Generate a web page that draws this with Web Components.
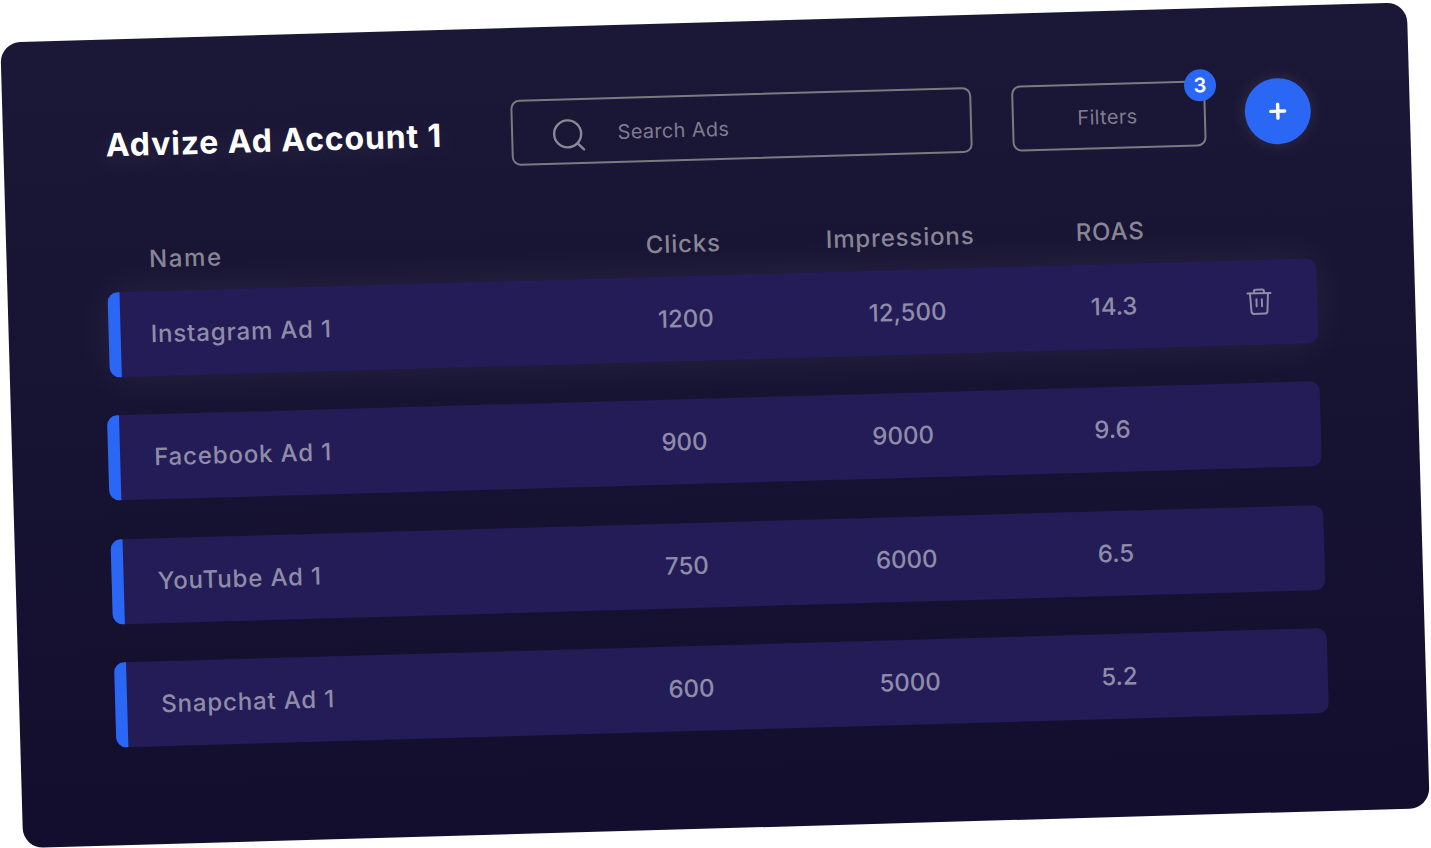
<!DOCTYPE html>
<html>
<head>
<meta charset="utf-8">
<title>Advize</title>
<style>
  html, body { margin: 0; height: 100%; background: #fff; overflow: hidden; }
  body { display: flex; align-items: center; justify-content: center; font-family: Inter, "Liberation Sans", sans-serif; }
</style>
</head>
<body>
<ad-card>
  <ad-toolbar slot="toolbar" heading="Advize Ad Account 1" count="3"></ad-toolbar>
  <ad-row slot="head" kind="head" name="Name" clicks="Clicks" impressions="Impressions" roas="ROAS"></ad-row>
  <ad-row active name="Instagram Ad 1" clicks="1200" impressions="12,500" roas="14.3"></ad-row>
  <ad-row name="Facebook Ad 1" clicks="900" impressions="9000" roas="9.6"></ad-row>
  <ad-row name="YouTube Ad 1" clicks="750" impressions="6000" roas="6.5"></ad-row>
  <ad-row name="Snapchat Ad 1" clicks="600" impressions="5000" roas="5.2"></ad-row>
</ad-card>

<script>
class AdCard extends HTMLElement {
  constructor () {
    super()
    this.attachShadow({ mode: 'open' })
  }

  connectedCallback () {
    this.shadowRoot.innerHTML = `
      <style>
        :host {
          display: block;
          flex: none;
          box-sizing: border-box;
          width: 1407px;
          height: 806px;
          margin: 2px 2px 0 0;
          padding: 72px 99px 0 96px;
          border-radius: 20px;
          background: linear-gradient(180deg, #1b1736 0%, #130e2e 100%);
          transform: translate(0.5px, 0.3px) rotate(-1.63deg);
        }
        .head { margin-top: 68px; height: 46.5px; }
        .rows { display: flex; flex-direction: column; gap: 38.5px; }
      </style>
      <slot name="toolbar"></slot>
      <div class="head"><slot name="head"></slot></div>
      <div class="rows"><slot></slot></div>`
  }
}

class AdToolbar extends HTMLElement {
  constructor () {
    super()
    this.attachShadow({ mode: 'open' })
  }

  connectedCallback () {
    const heading = this.getAttribute('heading')
    const count = this.getAttribute('count')
    this.shadowRoot.innerHTML = `
      <style>
        :host {
          display: grid;
          grid-template-columns: 412px 461px 40px 194px 39px 66px;
          align-items: stretch;
          height: 66px;
          color: #7f7c90;
        }
        h1 {
          margin: 0 0 0 6.5px;
          align-self: center;
          font-size: 32px;
          font-weight: 700;
          letter-spacing: 0.86px;
          white-space: nowrap;
          color: #fff;
          text-shadow: 0 6px 24px rgba(255, 255, 255, 0.12);
        }
        .box {
          box-sizing: border-box;
          border: 2px solid #7b7a80;
          border-radius: 9px;
          display: flex;
          align-items: center;
          font-size: 20px;
          letter-spacing: 0.3px;
        }
        .search { grid-column: 2; padding-left: 39px; gap: 29.5px; }
        .search svg { flex: none; }
        .search span { padding-top: 3px; }
        .filters { grid-column: 4; position: relative; justify-content: center; padding-right: 3px; }
        .filters > span:first-child { padding-top: 2px; }
        .badge {
          position: absolute;
          top: -13px;
          right: -13px;
          width: 32px;
          height: 32px;
          border-radius: 50%;
          background: #2a67f5;
          color: #fff;
          font-size: 20px;
          font-weight: 600;
          display: flex;
          align-items: center;
          justify-content: center;
        }
        .add {
          grid-column: 6;
          border-radius: 50%;
          background: #2a67f5;
          box-shadow: 0 0 18px rgba(255, 255, 255, 0.1);
          display: flex;
          align-items: center;
          justify-content: center;
        }
      </style>
      <h1>${heading}</h1>
      <div class="box search">
        <svg width="36" height="40" viewBox="0 0 36 40" fill="none" stroke="#8a8894" stroke-width="2.4" stroke-linecap="round">
          <circle cx="15.5" cy="22.5" r="13.5"/>
          <path d="M25.5 32.5 L31.5 38.5"/>
        </svg>
        <span>Search Ads</span>
      </div>
      <div class="box filters">
        <span>Filters</span>
        <span class="badge">${count}</span>
      </div>
      <div class="add">
        <svg width="18" height="18" viewBox="0 0 18 18" stroke="#fff" stroke-width="3.4" stroke-linecap="round">
          <path d="M9 2 V16 M2 9 H16"/>
        </svg>
      </div>`
  }
}

class AdRow extends HTMLElement {
  constructor () {
    super()
    this.attachShadow({ mode: 'open' })
  }

  connectedCallback () {
    const get = n => this.getAttribute(n)
    const isHead = get('kind') === 'head'
    const trash = `
      <svg class="trash" width="26" height="28" viewBox="0 0 26 28" fill="none" stroke="#8f8ca8" stroke-width="2" stroke-linecap="round" stroke-linejoin="round">
        <path d="M1.5 5.5 H24.5"/>
        <path d="M8 5 V3.4 Q8 1.8 9.8 1.8 H16.2 Q18 1.8 18 3.4 V5"/>
        <path d="M4 5.5 L5 23.4 Q5.1 26 7.6 26 H18.4 Q20.9 26 21 23.4 L22 5.5"/>
        <path d="M10.3 11.5 V18.5 M15.7 11.5 V18.5"/>
      </svg>`
    this.shadowRoot.innerHTML = `
      <style>
        :host {
          display: grid;
          box-sizing: border-box;
          grid-template-columns: 507.5px 211px 222px 156px 1fr;
          align-items: center;
          height: 85px;
          margin-right: -0.5px;
          padding-left: 46px;
          border-radius: 10px;
          background: #231c57;
          position: relative;
          font-size: 24px;
          font-weight: 500;
          letter-spacing: 0.85px;
          color: #8f8ca8;
          white-space: nowrap;
        }
        :host::before {
          content: "";
          position: absolute;
          left: 0;
          top: 0;
          bottom: 0;
          width: 12px;
          border-radius: 10px 0 0 10px;
          background: #2a67f5;
        }
        :host([active]) {
          margin-left: 3.6px;
          padding-left: 42.4px;
          box-shadow: 0 0 44px rgba(255, 255, 255, 0.07);
        }
        :host([kind="head"]) {
          display: block;
          height: 46.5px;
          padding: 0;
          background: none;
          color: #888594;
        }
        :host([kind="head"])::before { display: none; }
        .cols { display: grid; grid-template-columns: 497px 180px 250px auto; align-items: start; padding-left: 46.5px; }
        .cols span:first-child { letter-spacing: 1.6px; }
        .num { letter-spacing: 0; }
        .trash { justify-self: start; }
      </style>
      ${isHead
        ? `<div class="cols"><span>${get('name')}</span><span>${get('clicks')}</span><span>${get('impressions')}</span><span>${get('roas')}</span></div>`
        : `<span>${get('name')}</span><span class="num">${get('clicks')}</span><span class="num">${get('impressions')}</span><span class="num">${get('roas')}</span>${this.hasAttribute('active') ? trash : '<span></span>'}`}`
  }
}

customElements.define('ad-card', AdCard)
customElements.define('ad-toolbar', AdToolbar)
customElements.define('ad-row', AdRow)
</script>
</body>
</html>
